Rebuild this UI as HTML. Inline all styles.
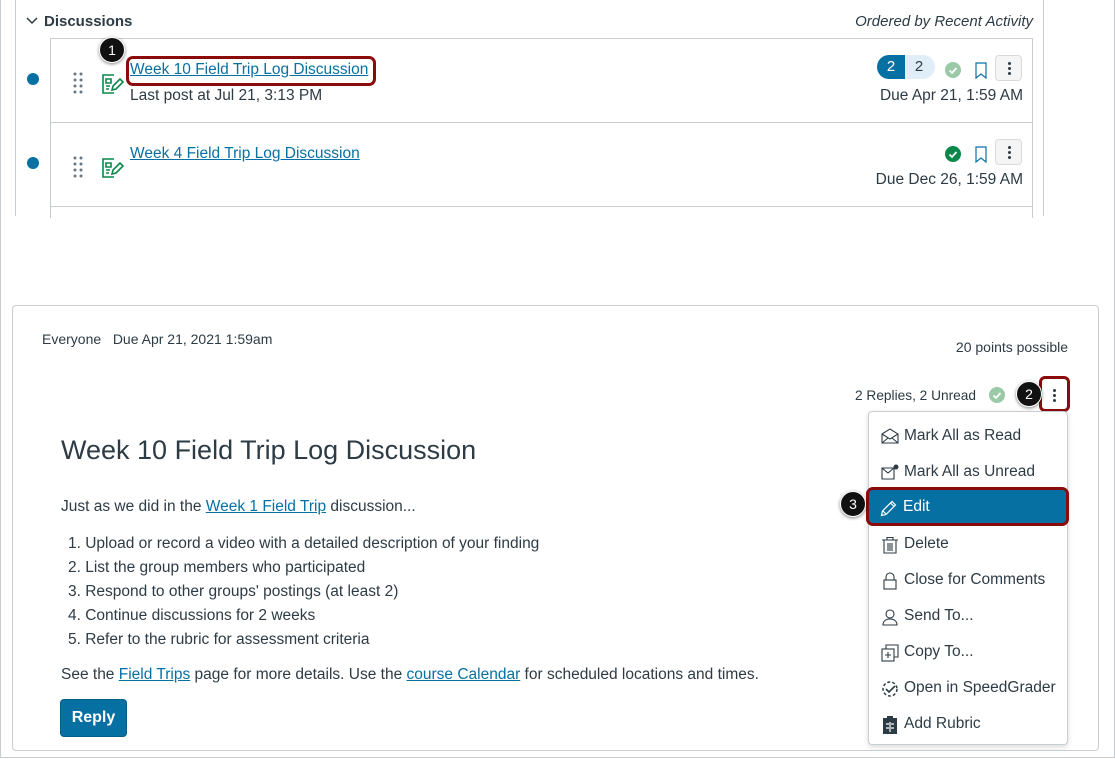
<!DOCTYPE html>
<html><head><meta charset="utf-8"><style>
*{box-sizing:border-box;margin:0;padding:0}
body{width:1115px;height:759px;position:relative;overflow:hidden;background:#fff;font-family:"Liberation Sans",sans-serif;color:#2d3b45}
.a{position:absolute}
a{color:#0770a3;text-decoration:underline}
.badge{width:26px;height:26px;border-radius:50%;background:#111;color:#fff;font-size:14px;text-align:center;line-height:24px;box-shadow:0 1px 3px rgba(0,0,0,.5);border:1px solid #fff}
.kebab{width:27px;height:26px;border:1px solid #d7dade;border-radius:4px;background:#f5f5f5}
.dot3{position:absolute;left:12px;width:3px;height:3px;border-radius:50%;background:#2d3b45}
.mi{position:absolute;left:10px;font-size:15.5px;color:#2d3b45;height:36px;line-height:36px;width:190px}
.mi svg{position:absolute;left:2px;top:10px}
.mi span{position:absolute;left:25px}
</style></head><body>
<div class="a" style="left:0;top:0;width:1115px;height:758px;border:1px solid #c7cdd1;border-top:none"></div>
<div class="a" style="left:15px;top:0;width:1px;height:216px;background:#c7cdd1"></div>
<div class="a" style="left:1043px;top:0;width:1px;height:216px;background:#c7cdd1"></div>
<div class="a" style="left:26px;top:13px;font-size:15px;font-weight:bold;color:#2d3b45">
<svg width="12" height="10" style="margin-right:6px"><path d="M1 2 L6 7 L11 2" fill="none" stroke="#2d3b45" stroke-width="1.5"/></svg>Discussions</div>
<div class="a" style="right:82px;top:13px;font-size:15px;font-style:italic;color:#2d3b45">Ordered by Recent Activity</div>
<div class="a" style="left:50px;top:38px;width:983px;height:180px;border:1px solid #c7cdd1;border-bottom:none"></div>
<div class="a" style="left:50px;top:122px;width:983px;height:1px;background:#c7cdd1"></div>
<div class="a" style="left:50px;top:206px;width:983px;height:1px;background:#c7cdd1"></div>
<div class="a" style="left:27px;top:73px;width:12px;height:12px;border-radius:50%;background:#0770a3"></div>
<div class="a" style="left:73px;top:72px"><svg width="10" height="22"><g fill="#6b7780"><circle cx="2" cy="2" r="1.5"/><circle cx="8" cy="2" r="1.5"/><circle cx="2" cy="8" r="1.5"/><circle cx="8" cy="8" r="1.5"/><circle cx="2" cy="14" r="1.5"/><circle cx="8" cy="14" r="1.5"/><circle cx="2" cy="20" r="1.5"/><circle cx="8" cy="20" r="1.5"/></g></svg></div>
<svg class="a" style="left:100px;top:72px" width="24" height="24" viewBox="0 0 24 24"><g fill="none" stroke="#0b874b" stroke-width="1.6"><path d="M14 3H3v18h11"/><path d="M6 7h5v4H6zM6 14h4M6 17h3"/><path d="M12 18l1-4 7-7 3 3-7 7z"/></g></svg>
<div class="a" style="left:126px;top:56px;width:250px;height:30px;border:3px solid #8b0b0b;border-radius:7px"></div>
<div class="a" style="left:130px;top:61px;font-size:15.5px"><a>Week 10 Field Trip Log Discussion</a></div>
<div class="a" style="left:130px;top:87px;font-size:15.5px;color:#2d3b45">Last post at Jul 21, 3:13 PM</div>
<div class="a badge" style="left:99px;top:37px">1</div>
<div class="a" style="left:877px;top:55px;width:58px;height:24px;border-radius:12px;background:#e0eef8;overflow:hidden;font-size:15px"><div class="a" style="left:0;top:0;width:28px;height:24px;background:#0770a3;color:#fff;text-align:center;line-height:24px">2</div><div class="a" style="left:28px;top:0;width:28px;text-align:center;line-height:24px">2</div></div>
<div class="a" style="left:945px;top:62px;width:16px;height:16px;border-radius:50%;background:#9bc9a8"><svg width="16" height="16"><path d="M4.5 8.5l2.5 2.5 4.5-5" fill="none" stroke="#fff" stroke-width="1.8"/></svg></div>
<svg class="a" style="left:975px;top:62px" width="12" height="17"><path d="M1 1h10v15l-5-4-5 4z" fill="none" stroke="#0770a3" stroke-width="1.2"/></svg>
<div class="a kebab" style="left:995px;top:55px"><div class="dot3" style="top:6px"></div><div class="dot3" style="top:11px"></div><div class="dot3" style="top:16px"></div></div>
<div class="a" style="right:92px;top:87px;font-size:15.5px">Due Apr 21, 1:59 AM</div>
<div class="a" style="left:27px;top:157px;width:12px;height:12px;border-radius:50%;background:#0770a3"></div>
<div class="a" style="left:73px;top:156px"><svg width="10" height="22"><g fill="#6b7780"><circle cx="2" cy="2" r="1.5"/><circle cx="8" cy="2" r="1.5"/><circle cx="2" cy="8" r="1.5"/><circle cx="8" cy="8" r="1.5"/><circle cx="2" cy="14" r="1.5"/><circle cx="8" cy="14" r="1.5"/><circle cx="2" cy="20" r="1.5"/><circle cx="8" cy="20" r="1.5"/></g></svg></div>
<svg class="a" style="left:100px;top:156px" width="24" height="24" viewBox="0 0 24 24"><g fill="none" stroke="#0b874b" stroke-width="1.6"><path d="M14 3H3v18h11"/><path d="M6 7h5v4H6zM6 14h4M6 17h3"/><path d="M12 18l1-4 7-7 3 3-7 7z"/></g></svg>
<div class="a" style="left:130px;top:145px;font-size:15.5px"><a>Week 4 Field Trip Log Discussion</a></div>
<div class="a" style="left:945px;top:146px;width:16px;height:16px;border-radius:50%;background:#0b874b"><svg width="16" height="16"><path d="M4.5 8.5l2.5 2.5 4.5-5" fill="none" stroke="#fff" stroke-width="1.8"/></svg></div>
<svg class="a" style="left:975px;top:146px" width="12" height="17"><path d="M1 1h10v15l-5-4-5 4z" fill="none" stroke="#0770a3" stroke-width="1.2"/></svg>
<div class="a kebab" style="left:995px;top:139px"><div class="dot3" style="top:6px"></div><div class="dot3" style="top:11px"></div><div class="dot3" style="top:16px"></div></div>
<div class="a" style="right:92px;top:171px;font-size:15.5px">Due Dec 26, 1:59 AM</div>
<!-- bottom card -->
<div class="a" style="left:12px;top:305px;width:1087px;height:446px;border:1px solid #c7cdd1;border-radius:4px"></div>
<div class="a" style="left:42px;top:331px;font-size:14px">Everyone&nbsp;&nbsp;&nbsp;Due Apr 21, 2021 1:59am</div>
<div class="a" style="right:47px;top:339px;font-size:14px">20 points possible</div>
<div class="a" style="right:139px;top:388px;font-size:13.7px">2 Replies, 2 Unread</div>
<div class="a" style="left:989px;top:387px;width:16px;height:16px;border-radius:50%;background:#9bc9a8"><svg width="16" height="16"><path d="M4.5 8.5l2.5 2.5 4.5-5" fill="none" stroke="#fff" stroke-width="1.8"/></svg></div>
<div class="a" style="left:1039px;top:376px;width:31px;height:36px;border:3px solid #8b0b0b;border-radius:6px"></div>
<div class="a" style="left:1053px;top:389px;width:3px;height:3px;border-radius:50%;background:#2d3b45"></div>
<div class="a" style="left:1053px;top:394px;width:3px;height:3px;border-radius:50%;background:#2d3b45"></div>
<div class="a" style="left:1053px;top:399px;width:3px;height:3px;border-radius:50%;background:#2d3b45"></div>
<div class="a badge" style="left:1016px;top:381px">2</div>
<div class="a" style="left:61px;top:435px;font-size:27px;color:#2d3b45">Week 10 Field Trip Log Discussion</div>
<div class="a" style="left:61px;top:498px;font-size:15.5px">Just as we did in the <a>Week 1 Field Trip</a> discussion...</div>
<div class="a" style="left:68px;top:532px;font-size:15.5px;line-height:24px">1. Upload or record a video with a detailed description of your finding<br>2. List the group members who participated<br>3. Respond to other groups' postings (at least 2)<br>4. Continue discussions for 2 weeks<br>5. Refer to the rubric for assessment criteria</div>
<div class="a" style="left:61px;top:666px;font-size:15.5px">See the <a>Field Trips</a> page for more details. Use the <a>course Calendar</a> for scheduled locations and times.</div>
<div class="a" style="left:60px;top:699px;width:67px;height:38px;background:#0770a3;border:1px solid #065d89;border-radius:4px;color:#fff;font-size:16px;font-weight:bold;text-align:center;line-height:36px">Reply</div>
<div class="a" style="left:868px;top:411px;width:200px;height:334px;background:#fff;border:1px solid #c7cdd1;border-radius:4px;box-shadow:0 2px 6px rgba(0,0,0,.15)">
<div class="mi" style="top:6px"><svg width="18" height="16"><path d="M1 6l8-5 8 5v9H1zM1 6l8 5 8-5M1 15l6-5M17 15l-6-5" fill="none" stroke="#2d3b45" stroke-width="1.1"/></svg><span>Mark All as Read</span></div>
<div class="mi" style="top:42px"><svg width="18" height="16"><path d="M1 4h12v11H1zM1 4l6 5 6-5" fill="none" stroke="#2d3b45" stroke-width="1.1"/><circle cx="15" cy="3" r="2.5" fill="#2d3b45"/></svg><span>Mark All as Unread</span></div>
<div class="mi" style="top:114px"><svg width="18" height="18"><path d="M1 4h16M6 4V1.5h6V4M3 4v13h12V4M7 7v8M9 7v8M11 7v8" fill="none" stroke="#2d3b45" stroke-width="1.1"/></svg><span>Delete</span></div>
<div class="mi" style="top:150px"><svg width="18" height="18"><rect x="3" y="8" width="12" height="9" fill="none" stroke="#2d3b45" stroke-width="1.1"/><path d="M5 8V5a4 4 0 0 1 8 0v3" fill="none" stroke="#2d3b45" stroke-width="1.1"/></svg><span>Close for Comments</span></div>
<div class="mi" style="top:186px"><svg width="18" height="18"><circle cx="9" cy="6" r="4" fill="none" stroke="#2d3b45" stroke-width="1.1"/><path d="M2 17c0-4 3-6 7-6s7 2 7 6z" fill="none" stroke="#2d3b45" stroke-width="1.1"/></svg><span>Send To...</span></div>
<div class="mi" style="top:222px"><svg width="18" height="18"><path d="M5 5V1h12v12h-4" fill="none" stroke="#2d3b45" stroke-width="1.1"/><rect x="1" y="5" width="12" height="12" fill="none" stroke="#2d3b45" stroke-width="1.1"/><path d="M7 8v6M4 11h6" stroke="#2d3b45" stroke-width="1.1"/></svg><span>Copy To...</span></div>
<div class="mi" style="top:258px"><svg width="18" height="18"><circle cx="9" cy="9" r="7" fill="none" stroke="#2d3b45" stroke-width="1.5" stroke-dasharray="3 2"/><path d="M5 9l3 3 6-6" fill="none" stroke="#2d3b45" stroke-width="1.6"/></svg><span>Open in SpeedGrader</span></div>
<div class="mi" style="top:294px"><svg width="18" height="18"><rect x="2" y="2" width="14" height="16" fill="#2d3b45"/><rect x="6" y="0" width="6" height="3" fill="#2d3b45"/><path d="M5 8h3M10 8h3M5 12h3M10 12h3M9 6v10" stroke="#fff" stroke-width="1.2"/></svg><span>Add Rubric</span></div>
</div>
<div class="a" style="left:866px;top:487px;width:203px;height:39px;border:3px solid #8b0b0b;border-radius:7px;background:#0770a3;color:#fff;font-size:15.5px">
<svg class="a" style="left:11px;top:9px" width="18" height="18"><path d="M1.5 16.5l1-4.5L12 2.5l3.5 3.5L6 15.5z M10.5 4l3.5 3.5 M3 12l3 3" fill="none" stroke="#fff" stroke-width="1.2"/></svg>
<span class="a" style="left:34px;top:8px">Edit</span></div>
<div class="a badge" style="left:840px;top:491px">3</div>
</body></html>
